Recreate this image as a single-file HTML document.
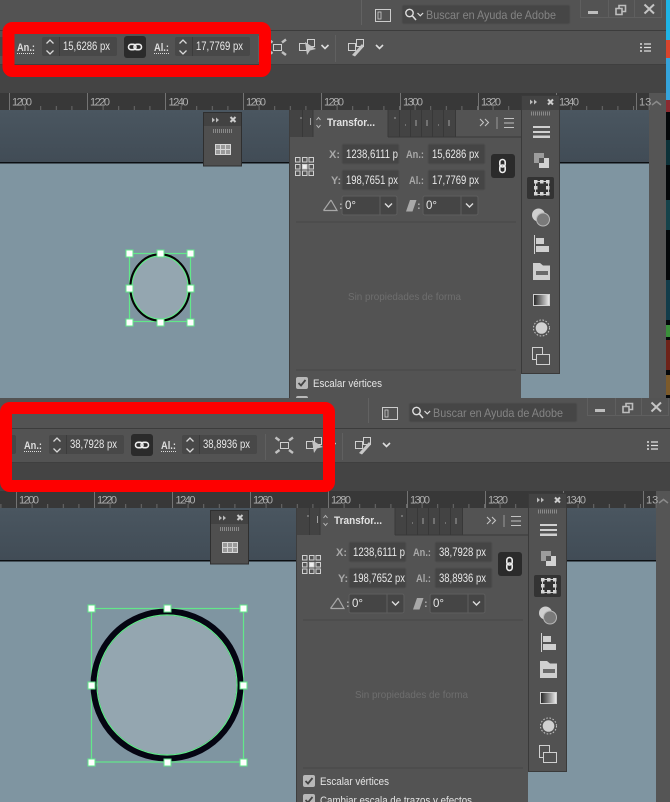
<!DOCTYPE html>
<html><head><meta charset="utf-8"><style>
html,body{margin:0;padding:0;background:#535353;overflow:hidden}
svg{display:block}
text{font-family:"Liberation Sans",sans-serif}
.v{font-size:11.5px;fill:#e8e8e8}
.l{font-size:11px;fill:#a8a8a8;font-weight:bold}
.b{font-size:11px;fill:#dedede;font-weight:bold}
.r{font-size:11px;fill:#aeaeae}
</style></head><body>
<svg width="670" height="802" viewBox="0 0 670 802" xmlns="http://www.w3.org/2000/svg">
<defs>
<linearGradient id="pb" x1="0" y1="0" x2="0" y2="1"><stop offset="0" stop-color="#4a5660"/><stop offset="1" stop-color="#414c56"/></linearGradient>
<linearGradient id="gr" x1="0" y1="0" x2="1" y2="0"><stop offset="0" stop-color="#222"/><stop offset="1" stop-color="#eee"/></linearGradient>
<pattern id="mt" x="9" y="106" width="15.6" height="4" patternUnits="userSpaceOnUse"><rect width="1" height="4" fill="#6b6b6b"/></pattern>
<g id="spin" fill="none" stroke="#d8d8d8" stroke-width="1.300"><path d="M-3.500 -3.500L0 -7L3.500 -3.500M-3.500 3.500L0 7L3.500 3.500"/></g>
<g id="hlink" fill="none" stroke="#eee" stroke-width="1.600"><rect x="-6.500" y="-2.700" width="7.500" height="5.400" rx="2.700"/><rect x="-1" y="-2.700" width="7.500" height="5.400" rx="2.700"/></g>
<g id="ref" fill="none" stroke="#d0d0d0" stroke-width="1"><rect x=".5" y=".5" width="4.500" height="4.500"/><rect x="7.500" y=".5" width="4.500" height="4.500"/><rect x="14" y=".5" width="4.500" height="4.500"/><rect x=".5" y="7.500" width="4.500" height="4.500"/><rect x="7.500" y="7.500" width="4.500" height="4.500" fill="#eee"/><rect x="14" y="7.500" width="4.500" height="4.500"/><rect x=".5" y="14" width="4.500" height="4.500"/><rect x="7.500" y="14" width="4.500" height="4.500"/><rect x="14" y="14" width="4.500" height="4.500"/></g>
<g id="base">
<rect x="-10" y="0" width="676" height="31" fill="#535353"/>
<rect x="-10" y="30" width="676" height="1" fill="#3c3c3c"/>
<rect x="-10" y="31" width="676" height="33" fill="#535353"/>
<rect x="-10" y="64" width="676" height="1" fill="#3f3f3f"/>
<rect x="-10" y="65" width="676" height="28" fill="#444"/>
<rect x="-10" y="93" width="660" height="17" fill="#383838"/>
<rect x="-10" y="110" width="660" height="52" fill="url(#pb)"/>
<rect x="-10" y="162" width="660" height="1.500" fill="#0c0f12"/>
<rect x="-10" y="163.500" width="660" height="242" fill="#7f95a1"/>
<rect x="649" y="93" width="17" height="313" fill="#555"/>
<path d="M652 105L656.500 101.500L661 105" fill="none" stroke="#8a8a8a" stroke-width="1.500"/>
<rect x="-10" y="106" width="660" height="4" fill="url(#mt)"/>
<g fill="#737373"><rect x="9" y="93" width="1" height="17"/><rect x="87" y="93" width="1" height="17"/><rect x="165" y="93" width="1" height="17"/><rect x="243" y="93" width="1" height="17"/><rect x="321" y="93" width="1" height="17"/><rect x="400" y="93" width="1" height="17"/><rect x="478" y="93" width="1" height="17"/><rect x="556" y="93" width="1" height="17"/><rect x="636" y="93" width="1" height="17"/></g>
<!-- title bar -->
<rect x="361" y="0" width="1" height="25" fill="#626262"/>
<rect x="375.500" y="9.500" width="15" height="12" fill="none" stroke="#ccc"/><rect x="378" y="12" width="3" height="7" fill="none" stroke="#ccc" stroke-width=".8"/>
<rect x="402" y="5" width="168" height="19" rx="2" fill="#464646" stroke="#4f4f4f"/>
<circle cx="409.500" cy="13" r="3.700" fill="none" stroke="#ddd" stroke-width="1.400"/><path d="M412.500 16L416 20" stroke="#ddd" stroke-width="1.600"/><path d="M417.500 13l2.800 2.800l2.800-2.800" fill="none" stroke="#ddd" stroke-width="1.200"/>
<path d="M580.500 0V17.500H661.500V0M608.500 0V17.500M634.500 0V17.500" fill="none" stroke="#5f5f5f"/>
<rect x="588" y="11" width="10" height="3" fill="#bdbdbd"/>
<path d="M616 8.500h6v6h-6zM619 8V5.500h6.500v6H622.500" fill="none" stroke="#bdbdbd" stroke-width="1.600"/>
<path d="M644.500 4.500L654 13.500M654 4.500L644.500 13.500" stroke="#c4c4c4" stroke-width="2"/>
<!-- control bar -->
<rect x="-12" y="37" width="21" height="19" rx="2" fill="#464646"/>
<path d="M17 53.500H35" stroke="#ddd" stroke-dasharray="1 1"/><path d="M154 53.500H169" stroke="#ddd" stroke-dasharray="1 1"/>
<rect x="42" y="37" width="75" height="19" rx="2" fill="#484848"/><rect x="59" y="37" width="1" height="19" fill="#3c3c3c"/>
<use href="#spin" x="50" y="47"/>
<rect x="124" y="36" width="22" height="22" rx="3" fill="#2b2b2b"/>
<use href="#hlink" x="135" y="47"/>
<rect x="175" y="37" width="75" height="19" rx="2" fill="#484848"/><rect x="192" y="37" width="1" height="19" fill="#3c3c3c"/>
<use href="#spin" x="183" y="47"/>
<rect x="258" y="36" width="1" height="26" fill="#5f5f5f"/>
<rect x="273.500" y="44.500" width="8" height="6" fill="none" stroke="#cfcfcf"/>
<path d="M268.500 39.500l4 3M286 39.500l-4 3M268.500 55l4-3M286 55l-4-3" stroke="#c0c0c0" stroke-width="2.400"/>
<rect x="299.500" y="43.500" width="7" height="7" fill="none" stroke="#cfcfcf"/><rect x="307.500" y="39.500" width="7" height="7" fill="none" stroke="#cfcfcf"/>
<path d="M305 42L316 49L310 50.500L307 55Z" fill="#c4c4c4"/>
<path d="M321.500 45l3.500 3.500l3.500-3.500" fill="none" stroke="#ddd" stroke-width="1.600"/>
<rect x="335" y="35" width="1" height="27" fill="#606060"/>
<rect x="348.500" y="43.500" width="7" height="7" fill="none" stroke="#cfcfcf"/><rect x="356.500" y="39.500" width="7" height="7" fill="none" stroke="#cfcfcf"/>
<path d="M352 55L362 44L364 46.500L355 56.500Z" fill="#c8c8c8"/>
<path d="M376 45l3.500 3.500l3.500-3.500" fill="none" stroke="#ddd" stroke-width="1.600"/>
<path d="M640 44h2M640 47.500h2M640 51h2" stroke="#ddd" stroke-width="1.600"/><path d="M644 44h7M644 47.500h7M644 51h7" stroke="#ddd" stroke-width="1.200"/>
<!-- float panel -->
<rect x="203.500" y="112.500" width="38" height="53.500" fill="#4f4f4f" stroke="#2f2f2f"/>
<rect x="204" y="113" width="37" height="13" fill="#424242"/>
<path d="M212 117.500v5l3-2.500zM216 117.500v5l3-2.500z" fill="#bbb"/>
<path d="M230.500 117l5 5M235.500 117l-5 5" stroke="#ccc" stroke-width="2"/>
<path d="M213 131h19" stroke="#8a8a8a" stroke-width="4" stroke-dasharray="1 1"/>
<rect x="215.500" y="144.500" width="15" height="10" fill="#9a9a9a" stroke="#d6d6d6"/><path d="M220.500 144.500v10M225.500 144.500v10M215.500 149.500h15" stroke="#d6d6d6"/>
<!-- transform panel -->
<rect x="289" y="110" width="232" height="296" fill="#535353"/>
<rect x="289" y="110" width="1" height="296" fill="#3e3e3e"/>
<rect x="290" y="110" width="23" height="27" fill="#434343"/>
<rect x="388" y="110" width="67" height="27" fill="#434343"/>
<rect x="388" y="136.500" width="133" height="1" fill="#3a3a3a"/>
<path d="M302.500 110v27M399.500 110v27M410.500 110v27M421.500 110v27M432.500 110v27M443.500 110v27M455.500 110v27M388 110v27M313 110v27" stroke="#383838"/>
<path d="M300 118h2M310.500 118v7M394 118h2M405 125h1M416 120v6M427 120v6M438 125h1M449 120v6" stroke="#a0a0a0"/>
<path d="M316.500 120l2-2.500l2 2.500M316.500 125l2 2.500l2-2.500" fill="none" stroke="#b8b8b8"/>
<path d="M480 119l3.500 3.500l-3.500 3.500M485 119l3.500 3.500l-3.500 3.500" fill="none" stroke="#c4c4c4" stroke-width="1.100"/>
<rect x="496.500" y="117" width="1" height="12" fill="#999"/>
<path d="M504 118.500h10M504 123h10M504 127.500h10" stroke="#c2c2c2"/>
<use href="#ref" x="295" y="157"/>
<rect x="342" y="144" width="57" height="20" rx="2" fill="#454545" stroke="#4e4e4e"/>
<rect x="428" y="144" width="57" height="20" rx="2" fill="#454545" stroke="#4e4e4e"/>
<rect x="342" y="170" width="57" height="20" rx="2" fill="#454545" stroke="#4e4e4e"/>
<rect x="428" y="170" width="57" height="20" rx="2" fill="#454545" stroke="#4e4e4e"/>
<rect x="491" y="154" width="24" height="24" rx="3" fill="#2b2b2b"/>
<g transform="translate(502.500 166) rotate(90)"><use href="#hlink"/></g>
<path d="M323.500 210.500H337L331 200" fill="none" stroke="#a8a8a8" stroke-width="1.200"/><path d="M323.500 210.500L331 200" fill="none" stroke="#a8a8a8" stroke-width="1.200"/>
<rect x="342" y="196" width="55" height="19" rx="2" fill="#454545" stroke="#5e5e5e"/><rect x="379.500" y="196" width="1" height="19" fill="#5e5e5e"/>
<path d="M385 203.500l3.500 3.500l3.500-3.500" fill="none" stroke="#ddd" stroke-width="1.400"/>
<path d="M406 211.500L410 200H416.500L412.500 211.500Z" fill="#a8a8a8"/>
<rect x="423" y="196" width="55" height="19" rx="2" fill="#454545" stroke="#5e5e5e"/><rect x="460.500" y="196" width="1" height="19" fill="#5e5e5e"/>
<path d="M466 203.500l3.500 3.500l3.500-3.500" fill="none" stroke="#ddd" stroke-width="1.400"/>
<rect x="296" y="221.500" width="220" height="1" fill="#474747"/>
<rect x="296" y="369.500" width="220" height="1" fill="#474747"/>
<rect x="296" y="377" width="12" height="12" rx="2" fill="#b8b8b8"/><path d="M298.500 383l2.500 2.500l4.500-5.500" fill="none" stroke="#444" stroke-width="1.800"/>
<rect x="296" y="396" width="12" height="12" rx="2" fill="#b8b8b8"/><path d="M298.500 402l2.500 2.500l4.500-5.500" fill="none" stroke="#444" stroke-width="1.800"/>
<!-- dock -->
<rect x="521.500" y="95.500" width="38" height="278" fill="#525252" stroke="#3a3a3a"/>
<rect x="522" y="96" width="37" height="14" fill="#434343"/>
<path d="M530 99.500v5l3-2.500zM534 99.500v5l3-2.500z" fill="#bbb"/>
<path d="M548 99.500l5 5M553 99.500l-5 5" stroke="#ccc" stroke-width="2"/>
<path d="M531 113.500h19" stroke="#8a8a8a" stroke-width="4" stroke-dasharray="1 1"/>
<rect x="533" y="126" width="17" height="2" fill="#d0d0d0"/><rect x="533" y="131" width="17" height="2" fill="#d0d0d0"/><rect x="533" y="135.500" width="17" height="2.500" fill="#d0d0d0"/>
<rect x="534" y="153" width="10" height="10" fill="#9c9c9c"/><rect x="539" y="158" width="10" height="10" fill="#d2d2d2"/><rect x="539" y="158" width="5" height="5" fill="#555"/>
<rect x="527" y="177" width="27" height="22" rx="2" fill="#333"/>
<rect x="535.500" y="181.500" width="13" height="13" fill="none" stroke="#cfcfcf"/>
<g fill="#d6d6d6"><rect x="534" y="180" width="3.500" height="3.500"/><rect x="540" y="180" width="3.500" height="3.500"/><rect x="546" y="180" width="3.500" height="3.500"/><rect x="534" y="186" width="3.500" height="3.500"/><rect x="546" y="186" width="3.500" height="3.500"/><rect x="534" y="192" width="3.500" height="3.500"/><rect x="540" y="192" width="3.500" height="3.500"/><rect x="546" y="192" width="3.500" height="3.500"/></g>
<circle cx="538.500" cy="215" r="6.500" fill="#cfcfcf"/><circle cx="543" cy="219.500" r="6.500" fill="#7a7a7a" stroke="#b8b8b8"/>
<rect x="534" y="235" width="1" height="19" fill="#d0d0d0"/><rect x="536" y="238" width="8" height="6" fill="#cfcfcf"/><rect x="536" y="246" width="13" height="6" fill="#cfcfcf"/>
<path d="M533 263H540L543 265.500H550V280H533Z" fill="#cfcfcf"/><rect x="536" y="271" width="12" height="4" fill="#6a6a6a"/>
<rect x="533.500" y="294.500" width="16" height="11" fill="url(#gr)" stroke="#d0d0d0"/>
<circle cx="541.500" cy="328" r="5.800" fill="#d0d0d0"/><circle cx="541.500" cy="328" r="8" fill="none" stroke="#c4c4c4" stroke-dasharray="1.600 1.600"/>
<rect x="532.500" y="347.500" width="10" height="12" fill="none" stroke="#d0d0d0"/><rect x="536.500" y="354.500" width="13" height="10" fill="#525252" stroke="#d0d0d0"/>
</g>
</defs>

<!-- colored strip -->
<rect x="666" y="0" width="4" height="398" fill="#05080a"/>
<rect x="666" y="0" width="4" height="40" fill="#1eb4e6"/>
<rect x="666" y="40" width="4" height="18" fill="#d8442c"/>
<rect x="666" y="58" width="4" height="42" fill="#35a4dc"/>
<rect x="666" y="100" width="4" height="12" fill="#8b2a30"/>
<rect x="666" y="140" width="4" height="25" fill="#0c3138"/>
<rect x="666" y="200" width="4" height="30" fill="#15424a"/>
<rect x="666" y="280" width="4" height="40" fill="#123c4a"/>
<rect x="666" y="325" width="4" height="12" fill="#3a8f3a"/>
<rect x="666" y="340" width="4" height="30" fill="#6e2218"/>
<rect x="666" y="375" width="4" height="20" fill="#7c5a2a"/>

<!-- SHOT 1 -->
<g>
<use href="#base"/>
<text x="426" y="19" font-size="12" fill="#848484" textLength="130" lengthAdjust="spacingAndGlyphs">Buscar en Ayuda de Adobe</text>
<text class="b" x="17" y="51" textLength="18" lengthAdjust="spacingAndGlyphs">An.:</text>
<text class="v" x="63" y="50" textLength="47" lengthAdjust="spacingAndGlyphs">15,6286 px</text>
<text class="b" x="154" y="51" textLength="15" lengthAdjust="spacingAndGlyphs">Al.:</text>
<text class="v" x="196" y="50" textLength="47" lengthAdjust="spacingAndGlyphs">17,7769 px</text>
<text class="r" x="12" y="105.500" textLength="20">1200</text><text class="r" x="90" y="105.500" textLength="20">1220</text><text class="r" x="168.500" y="105.500" textLength="20">1240</text><text class="r" x="246" y="105.500" textLength="20">1260</text><text class="r" x="324" y="105.500" textLength="20">1280</text><text class="r" x="403" y="105.500" textLength="20">1300</text><text class="r" x="481" y="105.500" textLength="20">1320</text><text class="r" x="559" y="105.500" textLength="20">1340</text><text class="r" x="639" y="105.500">13</text>
<text x="327" y="126" font-size="11" font-weight="bold" fill="#e2e2e2" textLength="48" lengthAdjust="spacingAndGlyphs">Transfor...</text>
<text class="l" x="329" y="158">X:</text><text class="v" x="346" y="158" textLength="52" lengthAdjust="spacingAndGlyphs">1238,6111 p</text>
<text class="l" x="406" y="158" textLength="18" lengthAdjust="spacingAndGlyphs">An.:</text><text class="v" x="432" y="158" textLength="47" lengthAdjust="spacingAndGlyphs">15,6286 px</text>
<text class="l" x="331" y="184">Y:</text><text class="v" x="346" y="184" textLength="52" lengthAdjust="spacingAndGlyphs">198,7651 px</text>
<text class="l" x="409" y="184" textLength="15" lengthAdjust="spacingAndGlyphs">Al.:</text><text class="v" x="432" y="184" textLength="47" lengthAdjust="spacingAndGlyphs">17,7769 px</text>
<text class="l" x="339" y="209">:</text><text class="v" x="345" y="209">0°</text>
<text class="l" x="417" y="209">:</text><text class="v" x="426" y="209">0°</text>
<text x="348" y="300" font-size="10.500" fill="#6e6e6e" textLength="113" lengthAdjust="spacingAndGlyphs">Sin propiedades de forma</text>
<text x="313" y="387" font-size="11" fill="#e4e4e4" textLength="69" lengthAdjust="spacingAndGlyphs">Escalar vértices</text>
<!-- selection -->
<rect x="129.500" y="253.500" width="61" height="68" fill="none" stroke="#62e88a" stroke-width="1.200"/>
<ellipse cx="160" cy="287.500" rx="29.500" ry="33" fill="#94a6b0" stroke="#050505" stroke-width="2.500"/>
<ellipse cx="160" cy="287.500" rx="28" ry="31.500" fill="none" stroke="#62e88a" stroke-width="1.200"/>
<g fill="#fff" stroke="#62e88a"><rect x="126" y="250" width="7" height="7"/><rect x="157" y="250" width="7" height="7"/><rect x="187" y="250" width="7" height="7"/><rect x="126" y="285" width="7" height="7"/><rect x="187" y="285" width="7" height="7"/><rect x="126" y="319" width="7" height="7"/><rect x="157" y="319" width="7" height="7"/><rect x="187" y="319" width="7" height="7"/></g>
<rect x="8.500" y="28" width="256.500" height="43" rx="4" fill="none" stroke="#fe0000" stroke-width="12"/>
</g>

<!-- SHOT 2 -->
<g transform="translate(7 398)">
<use href="#base"/>
<text x="426" y="19" font-size="12" fill="#848484" textLength="130" lengthAdjust="spacingAndGlyphs">Buscar en Ayuda de Adobe</text>
<text class="b" x="17" y="51" textLength="18" lengthAdjust="spacingAndGlyphs">An.:</text>
<text class="v" x="63" y="50" textLength="47" lengthAdjust="spacingAndGlyphs">38,7928 px</text>
<text class="b" x="154" y="51" textLength="15" lengthAdjust="spacingAndGlyphs">Al.:</text>
<text class="v" x="196" y="50" textLength="47" lengthAdjust="spacingAndGlyphs">38,8936 px</text>
<text class="v" x="-1" y="50">x</text>
<text class="r" x="12" y="105.500" textLength="20">1200</text><text class="r" x="90" y="105.500" textLength="20">1220</text><text class="r" x="168.500" y="105.500" textLength="20">1240</text><text class="r" x="246" y="105.500" textLength="20">1260</text><text class="r" x="324" y="105.500" textLength="20">1280</text><text class="r" x="403" y="105.500" textLength="20">1300</text><text class="r" x="481" y="105.500" textLength="20">1320</text><text class="r" x="559" y="105.500" textLength="20">1340</text><text class="r" x="639" y="105.500">13</text>
<text x="327" y="126" font-size="11" font-weight="bold" fill="#e2e2e2" textLength="48" lengthAdjust="spacingAndGlyphs">Transfor...</text>
<text class="l" x="329" y="158">X:</text><text class="v" x="346" y="158" textLength="52" lengthAdjust="spacingAndGlyphs">1238,6111 p</text>
<text class="l" x="406" y="158" textLength="18" lengthAdjust="spacingAndGlyphs">An.:</text><text class="v" x="432" y="158" textLength="47" lengthAdjust="spacingAndGlyphs">38,7928 px</text>
<text class="l" x="331" y="184">Y:</text><text class="v" x="346" y="184" textLength="52" lengthAdjust="spacingAndGlyphs">198,7652 px</text>
<text class="l" x="409" y="184" textLength="15" lengthAdjust="spacingAndGlyphs">Al.:</text><text class="v" x="432" y="184" textLength="47" lengthAdjust="spacingAndGlyphs">38,8936 px</text>
<text class="l" x="339" y="209">:</text><text class="v" x="345" y="209">0°</text>
<text class="l" x="417" y="209">:</text><text class="v" x="426" y="209">0°</text>
<text x="348" y="300" font-size="10.500" fill="#6e6e6e" textLength="113" lengthAdjust="spacingAndGlyphs">Sin propiedades de forma</text>
<text x="313" y="387" font-size="11" fill="#e4e4e4" textLength="69" lengthAdjust="spacingAndGlyphs">Escalar vértices</text>
<text x="313" y="406" font-size="11" fill="#e4e4e4" textLength="152" lengthAdjust="spacingAndGlyphs">Cambiar escala de trazos y efectos</text>
</g>
<rect x="91.500" y="608.500" width="152" height="153.500" fill="none" stroke="#62e88a" stroke-width="1.200"/>
<circle cx="167" cy="685" r="73" fill="#94a6b0" stroke="#050512" stroke-width="7"/>
<circle cx="167" cy="685" r="70" fill="none" stroke="#62e88a" stroke-width="1.200"/>
<g fill="#fff" stroke="#62e88a"><rect x="88" y="605" width="7" height="7"/><rect x="164" y="605" width="7" height="7"/><rect x="240" y="605" width="7" height="7"/><rect x="88" y="682" width="7" height="7"/><rect x="240" y="682" width="7" height="7"/><rect x="88" y="759" width="7" height="7"/><rect x="164" y="759" width="7" height="7"/><rect x="240" y="759" width="7" height="7"/></g>
<rect x="6" y="408" width="323" height="78" rx="4" fill="none" stroke="#fe0000" stroke-width="12"/>
</svg>
</body></html>
